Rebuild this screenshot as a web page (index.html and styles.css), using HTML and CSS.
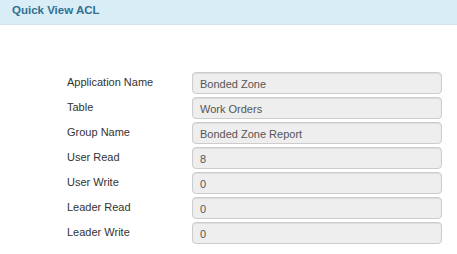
FILE: index.html
```html
<!DOCTYPE html>
<html lang="en">
<head>
    <meta charset="UTF-8">
    <title>Quick View ACL</title>
    <link rel="stylesheet" href="styles.css">
</head>
<body>

    <div class="panel">
        <!-- Panel heading -->
        <div class="panel-heading">Quick View ACL</div>

        <!-- ACL fields -->
        <div class="panel-body">
            <div class="form-row">
                <label>Application Name</label>
                <input type="text" class="field" value="Bonded Zone" readonly>
            </div>
            <div class="form-row">
                <label>Table</label>
                <input type="text" class="field" value="Work Orders" readonly>
            </div>
            <div class="form-row">
                <label>Group Name</label>
                <input type="text" class="field" value="Bonded Zone Report" readonly>
            </div>
            <div class="form-row">
                <label>User Read</label>
                <input type="text" class="field" value="8" readonly>
            </div>
            <div class="form-row">
                <label>User Write</label>
                <input type="text" class="field" value="0" readonly>
            </div>
            <div class="form-row">
                <label>Leader Read</label>
                <input type="text" class="field" value="0" readonly>
            </div>
            <div class="form-row">
                <label>Leader Write</label>
                <input type="text" class="field" value="0" readonly>
            </div>
        </div>
    </div>

</body>
</html>
```

FILE: styles.css
```css
body {
    font-family: 'Liberation Sans', Arial, sans-serif;
    font-size: 11px;
    background-color: #fff;
    color: #333;
    margin: 0;
}

.panel-heading {
    background-color: #d9edf7;
    border-bottom: 1px solid #d0e3ee;
    color: #31708f;
    font-weight: bold;
    font-size: 11.5px;
    height: 25px;
    line-height: 20px;
    padding: 0 12px;
    box-sizing: border-box;
}

.panel-body {
    padding: 47px 15px 0 67px;
    display: flex;
    flex-direction: column;
    gap: 3px;
}

.form-row {
    display: grid;
    grid-template-columns: 125px 250px;
    height: 22px;
}

label {
    line-height: 21px;
    color: #333;
}

.field {
    font-family: 'Liberation Sans', Arial, sans-serif;
    font-size: 11px;
    color: #555;
    background-color: #eee;
    border: 1px solid #ccc;
    border-radius: 4px;
    box-shadow: inset 0 1px 1px rgba(0, 0, 0, 0.075);
    height: 22px;
    padding: 2px 7px 0;
    margin: 0;
    box-sizing: border-box;
    outline: none;
}
```
